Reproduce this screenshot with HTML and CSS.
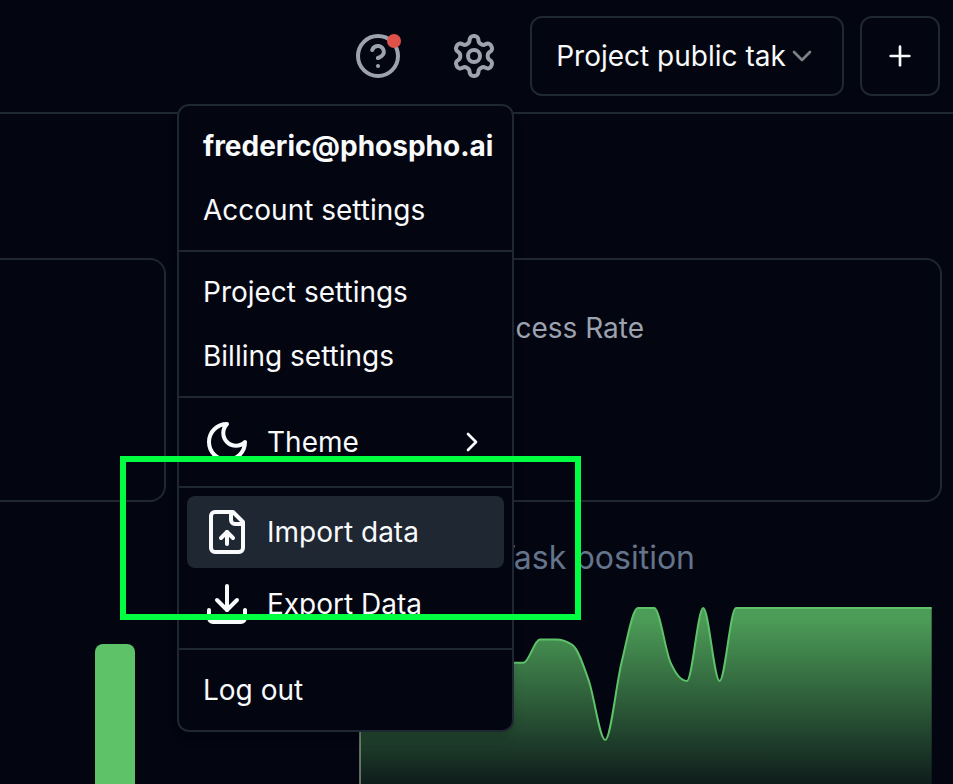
FILE: index.html
```html
<!DOCTYPE html>
<html lang="en">
<head>
<meta charset="utf-8">
<title>Project dashboard</title>
<link rel="stylesheet" href="styles.css">
</head>
<body>
<header class="topbar">
  <button class="icon-button help" aria-label="Help">
    <svg class="icon" viewBox="0 0 24 24"><circle cx="12" cy="12" r="10"/><path d="M9.09 9a3 3 0 0 1 5.83 1c0 2-3 3-3 3"/><path d="M12 17h.01"/></svg>
    <span class="badge"></span>
  </button>
  <button class="icon-button" aria-label="Settings">
    <svg class="icon" viewBox="0 0 24 24"><path d="M12.22 2h-.44a2 2 0 0 0-2 2v.18a2 2 0 0 1-1 1.73l-.43.25a2 2 0 0 1-2 0l-.15-.08a2 2 0 0 0-2.73.73l-.22.38a2 2 0 0 0 .73 2.73l.15.1a2 2 0 0 1 1 1.72v.51a2 2 0 0 1-1 1.74l-.15.09a2 2 0 0 0-.73 2.73l.22.38a2 2 0 0 0 2.73.73l.15-.08a2 2 0 0 1 2 0l.43.25a2 2 0 0 1 1 1.73V20a2 2 0 0 0 2 2h.44a2 2 0 0 0 2-2v-.18a2 2 0 0 1 1-1.73l.43-.25a2 2 0 0 1 2 0l.15.08a2 2 0 0 0 2.73-.73l.22-.39a2 2 0 0 0-.73-2.73l-.15-.08a2 2 0 0 1-1-1.74v-.5a2 2 0 0 1 1-1.74l.15-.09a2 2 0 0 0 .73-2.73l-.22-.38a2 2 0 0 0-2.73-.73l-.15.08a2 2 0 0 1-2 0l-.43-.25a2 2 0 0 1-1-1.73V4a2 2 0 0 0-2-2z"/><circle cx="12" cy="12" r="3"/></svg>
  </button>
  <button class="select"><span>Project public tak</span><svg class="icon small dim" viewBox="0 0 24 24"><path d="m6 9 6 6 6-6"/></svg></button>
  <button class="add" aria-label="Add"><svg class="icon small" viewBox="0 0 24 24"><path d="M5 12h14"/><path d="M12 5v14"/></svg></button>
</header>

<main>
  <section class="cards">
    <div class="card first"></div>
    <div class="card rate"><span class="card-title">Success Rate</span></div>
  </section>
  <section class="charts">
    <div class="bar-chart"><div class="bar"></div></div>
    <div class="area-chart">
      <h2 class="chart-title">Task position</h2>
      <svg class="area" viewBox="359 604 574 180">
        <defs>
          <linearGradient id="fade" gradientUnits="userSpaceOnUse" x1="0" y1="608" x2="0" y2="826">
            <stop offset="0.05" stop-color="#5ec269" stop-opacity="0.8"/>
            <stop offset="0.95" stop-color="#5ec269" stop-opacity="0"/>
          </linearGradient>
        </defs>
        <path class="axis" d="M360 604V784"/>
        <path fill="url(#fade)" d="M360 784V662.7H523.5C528.9 662.7 534.4 639.5 539.8 639.5H556.2C561.6 639.5 567.1 641.3 572.5 645C578 648.7 583.4 665.2 588.9 681C594.3 696.8 599.8 740 605.2 740C610.6 740 616.1 684.7 621.5 662.7C627 640.7 632.4 608 637.9 608H654.2C659.7 608 665.1 650.5 670.6 662.7C676 674.9 681.5 681 686.9 681C692.3 681 697.8 608 703.2 608C708.7 608 714.1 681 719.6 681C725 681 730.4 608 735.9 608H931.7V784Z"/>
        <path class="line" d="M360 662.7H523.5C528.9 662.7 534.4 639.5 539.8 639.5H556.2C561.6 639.5 567.1 641.3 572.5 645C578 648.7 583.4 665.2 588.9 681C594.3 696.8 599.8 740 605.2 740C610.6 740 616.1 684.7 621.5 662.7C627 640.7 632.4 608 637.9 608H654.2C659.7 608 665.1 650.5 670.6 662.7C676 674.9 681.5 681 686.9 681C692.3 681 697.8 608 703.2 608C708.7 608 714.1 681 719.6 681C725 681 730.4 608 735.9 608H931.7"/>
      </svg>
    </div>
  </section>
</main>

<nav class="menu">
  <div class="group">
    <div class="item email">frederic@phospho.ai</div>
    <div class="item">Account settings</div>
  </div>
  <div class="group">
    <div class="item">Project settings</div>
    <div class="item">Billing settings</div>
  </div>
  <div class="group">
    <div class="item with-icon"><svg class="icon" viewBox="0 0 24 24"><path d="M12 3a6 6 0 0 0 9 9 9 9 0 1 1-9-9Z"/></svg><span>Theme</span><svg class="icon small arrow" viewBox="0 0 24 24"><path d="m9 18 6-6-6-6"/></svg></div>
  </div>
  <div class="group">
    <div class="item with-icon active"><svg class="icon" viewBox="0 0 24 24"><path d="M15 2H6a2 2 0 0 0-2 2v16a2 2 0 0 0 2 2h12a2 2 0 0 0 2-2V7Z"/><path d="M14 2v4a2 2 0 0 0 2 2h4"/><path d="M12 12v6"/><path d="m15 15-3-3-3 3"/></svg><span>Import data</span></div>
    <div class="item with-icon"><svg class="icon" viewBox="0 0 24 24"><path d="M21 15v4a2 2 0 0 1-2 2H5a2 2 0 0 1-2-2v-4"/><path d="m7 10 5 5 5-5"/><path d="M12 15V3"/></svg><span>Export Data</span></div>
  </div>
  <div class="group">
    <div class="item">Log out</div>
  </div>
</nav>
<div class="highlight"></div>
</body>
</html>
```
FILE: styles.css
```css
:root {
  --bg: #030510;
  --border: #1f2733;
  --text: #f9fafb;
  --muted: #9ca3af;
}

* { box-sizing: border-box; }

body {
  position: relative;
  width: 953px;
  height: 784px;
  margin: 0;
  overflow: hidden;
  background: var(--bg);
  color: var(--text);
  font: 400 28px/40px Inter, "Liberation Sans", sans-serif;
}

button {
  padding: 0;
  border: 0;
  background: none;
  color: inherit;
  font: inherit;
}

.icon {
  display: block;
  flex: none;
  width: 48px;
  height: 48px;
  fill: none;
  stroke: currentColor;
  stroke-width: 2;
  stroke-linecap: round;
  stroke-linejoin: round;
}

.icon.small { width: 32px; height: 32px; }
.icon.dim { opacity: 0.5; }

.topbar {
  display: flex;
  align-items: center;
  justify-content: flex-end;
  height: 114px;
  padding: 0 13px 0 0;
  border-bottom: 2px solid var(--border);
}

.icon-button { position: relative; margin-right: 48px; color: var(--muted); }
.icon-button + .select { margin-left: -16px; }

.badge {
  position: absolute;
  top: 2px;
  right: 1px;
  width: 14px;
  height: 14px;
  border-radius: 50%;
  background: #df524a;
}

.select, .add {
  display: flex;
  align-items: center;
  height: 80px;
  border: 2px solid var(--border);
  border-radius: 12px;
}

.select { width: 314px; padding-left: 24px; white-space: nowrap; }
.select span { width: 230px; }
.add { justify-content: center; width: 80px; margin-left: 16px; }

main { padding-top: 144px; }

.cards { display: flex; gap: 32px; }
.card {
  height: 244px;
  border: 2px solid var(--border);
  border-radius: 24px;
}
.card.first {
  width: 166px;
  border-left: 0;
  border-top-left-radius: 0;
  border-bottom-left-radius: 0;
}
.card.rate { width: 744px; padding: 48px 296px 0 0; text-align: right; }
.card { border-radius: 16px; }
.card.first { border-radius: 0 16px 16px 0; }
.card-title { color: var(--muted); }

.charts { display: flex; height: 282px; }
.bar-chart { width: 198px; padding: 142px 0 0 95px; }
.bar {
  width: 40px;
  height: 140px;
  border-radius: 8px 8px 0 0;
  background: #5ec269;
}
.area-chart { width: 735px; padding-top: 36px; }
.chart-title {
  width: 497px;
  margin: 0 0 26px;
  color: #64748b;
  font-size: 32px;
  font-weight: 400;
  line-height: 40px;
  text-align: right;
}
.area { display: block; width: 574px; height: 180px; margin-left: 161px; }
.axis { fill: none; stroke: #666; stroke-width: 2; }
.line { fill: none; stroke: #5ec269; stroke-width: 2; }

.menu {
  position: absolute;
  top: 104px;
  left: 177px;
  width: 337px;
  border: 2px solid var(--border);
  border-radius: 12px;
  background: var(--bg);
  box-shadow: 0 8px 12px -2px rgba(0, 0, 0, 0.1), 0 4px 8px -4px rgba(0, 0, 0, 0.1);
}
.group { padding: 8px; }
.group + .group { border-top: 2px solid var(--border); }
.item { padding: 12px 16px; white-space: nowrap; }
.item.email { font-weight: 700; }
.item.with-icon {
  display: flex;
  align-items: center;
  gap: 16px;
  border-radius: 8px;
}
.item.active { background: #1f2733; }
.arrow { margin-left: auto; }

.highlight {
  position: absolute;
  top: 456px;
  left: 120px;
  width: 461px;
  height: 164px;
  border: 6px solid #00ff41;
}
```
